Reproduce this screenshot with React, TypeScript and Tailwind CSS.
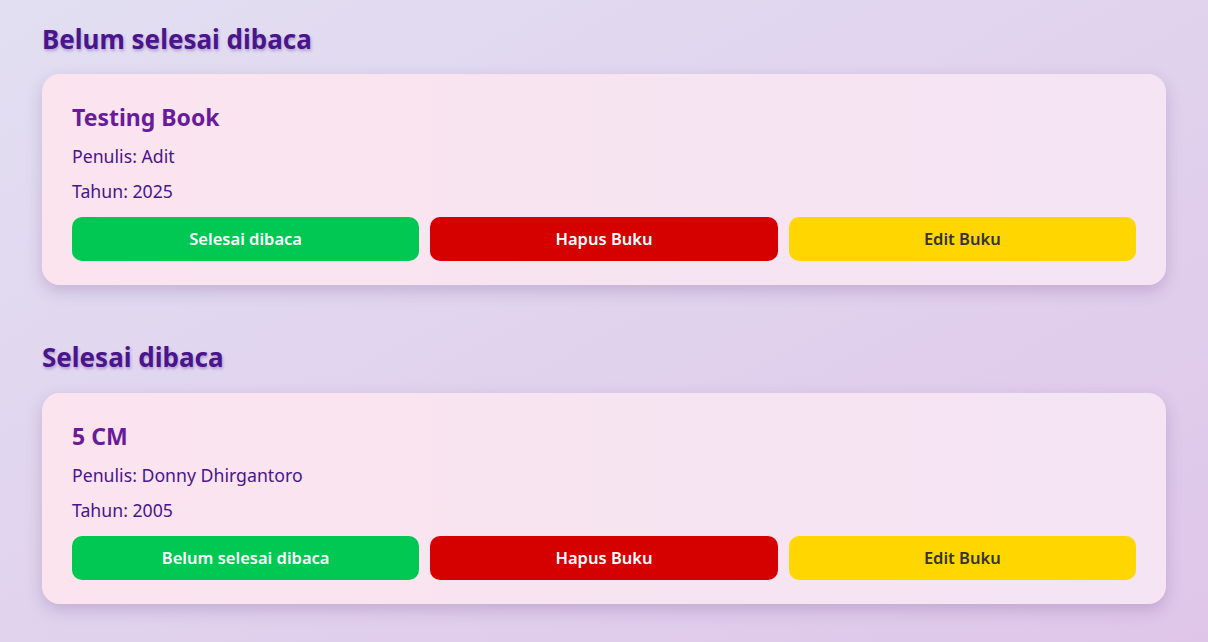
import React from "react";

type Book = { title: string; author: string; year: number; toggle: string };

const unread: Book[] = [{ title: "Testing Book", author: "Adit", year: 2025, toggle: "Selesai dibaca" }];
const read: Book[] = [{ title: "5 CM", author: "Donny Dhirgantoro", year: 2005, toggle: "Belum selesai dibaca" }];

function Card({ b }: { b: Book }) {
  return (
    <div className="rounded-[18px] bg-gradient-to-r from-[#fbe4ee] to-[#f4e4f4] px-[30px] pt-[28px] pb-[24px] shadow-[0_6px_16px_rgba(90,50,120,0.22)]">
      <h3 className="text-[23px] font-bold leading-[30px] text-[#6a1b9a]">{b.title}</h3>
      <p className="mt-[12px] text-[17.7px] leading-[24px] text-[#4a148c]">Penulis: {b.author}</p>
      <p className="mt-[11px] text-[17.7px] leading-[24px] text-[#4a148c]">Tahun: {b.year}</p>
      <div className="mt-[14px] grid grid-cols-3 gap-[11px]">
        <button className="h-[44px] rounded-[10px] bg-[#00c853] text-[16.5px] font-semibold text-white">{b.toggle}</button>
        <button className="h-[44px] rounded-[10px] bg-[#d50000] text-[16.5px] font-semibold text-white">Hapus Buku</button>
        <button className="h-[44px] rounded-[10px] bg-[#ffd600] text-[16.5px] font-semibold text-[#333333]">Edit Buku</button>
      </div>
    </div>
  );
}

export default function App() {
  return (
    <div
      className="min-h-[642px] bg-gradient-to-br from-[#e2dff2] to-[#dfc6e9] px-[42px] pt-[20px] pb-[40px]"
      style={{ fontFamily: '"Noto Sans", "Open Sans", sans-serif' }}
    >
      <h2 className="text-[26px] font-bold leading-[38px] text-[#4a148c] [text-shadow:1px_2px_3px_rgba(74,20,140,0.3)]">Belum selesai dibaca</h2>
      <div className="mt-[16px] flex flex-col gap-4">
        {unread.map((b) => <Card key={b.title} b={b} />)}
      </div>
      <h2 className="mt-[53px] text-[26px] font-bold leading-[38px] text-[#4a148c] [text-shadow:1px_2px_3px_rgba(74,20,140,0.3)]">Selesai dibaca</h2>
      <div className="mt-[17px] flex flex-col gap-4">
        {read.map((b) => <Card key={b.title} b={b} />)}
      </div>
    </div>
  );
}
